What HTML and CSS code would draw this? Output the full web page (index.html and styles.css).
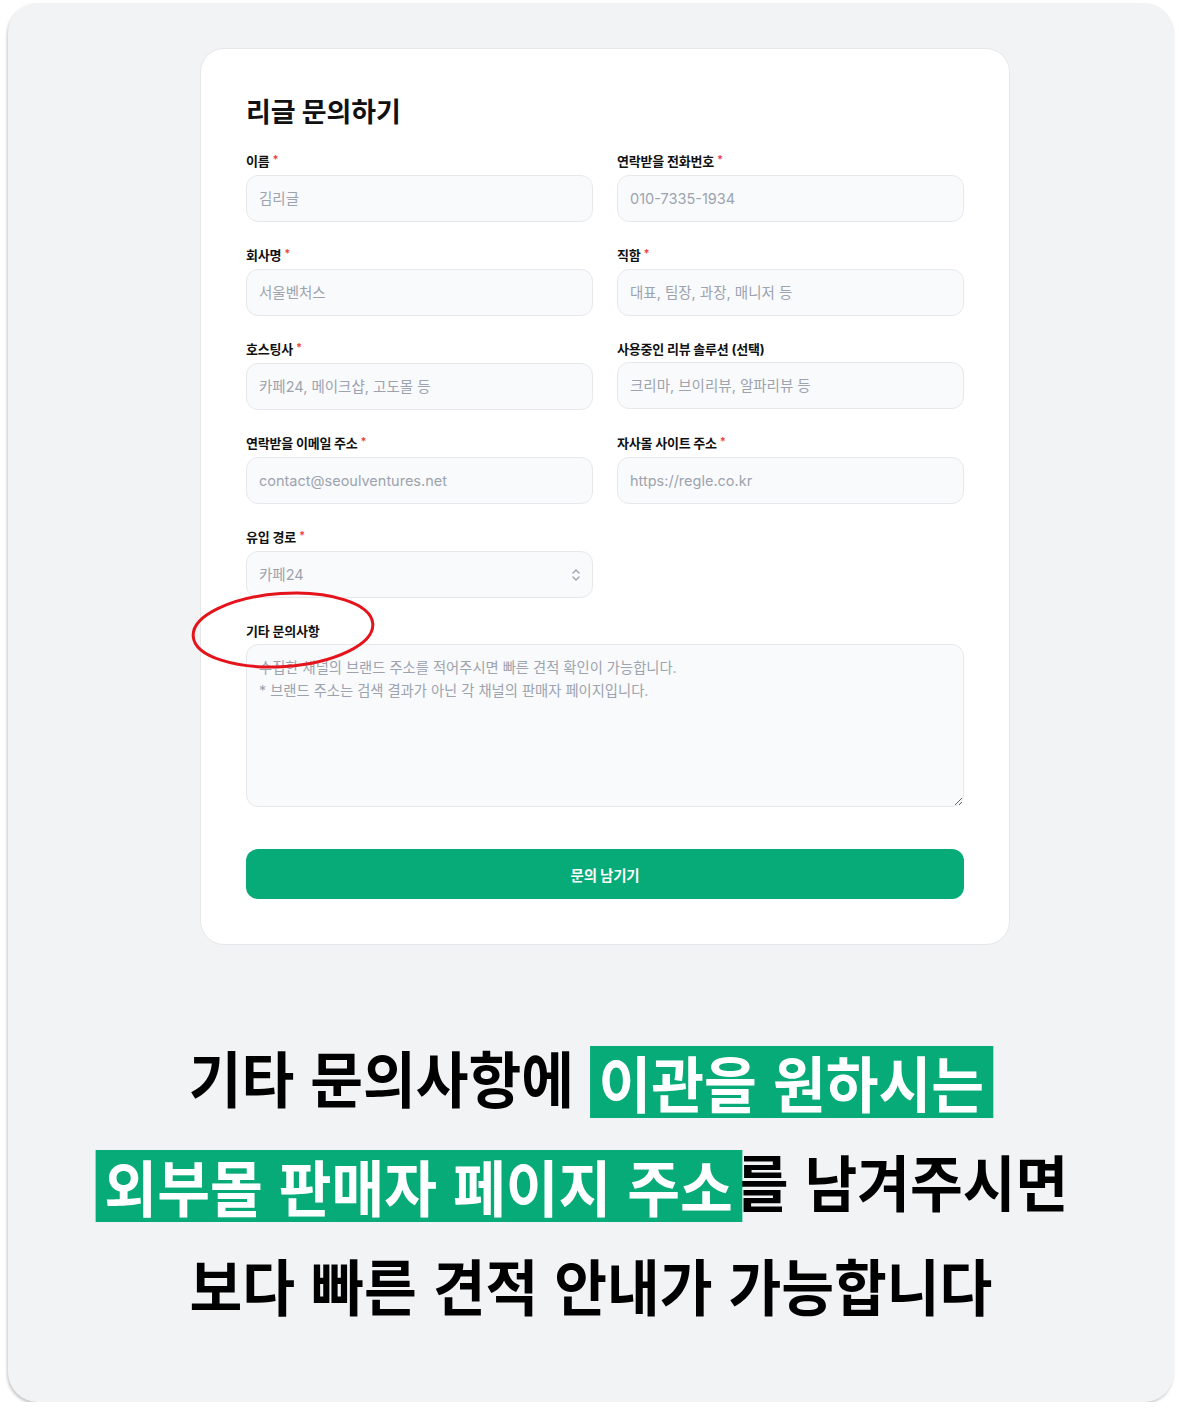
FILE: index.html
```html
<!DOCTYPE html>
<html lang="ko">
<head>
<meta charset="utf-8">
<link rel="stylesheet" href="styles.css">
</head>
<body>
<div class="frame">
  <div class="card">
    <h1 class="title">리글 문의하기</h1>
    <form class="grid">
      <div class="field">
        <label class="label">이름<span class="req">*</span></label>
        <input class="input" placeholder="김리글">
      </div>
      <div class="field">
        <label class="label">연락받을 전화번호<span class="req">*</span></label>
        <input class="input" placeholder="010-7335-1934">
      </div>
      <div class="field">
        <label class="label">회사명<span class="req">*</span></label>
        <input class="input" placeholder="서울벤처스">
      </div>
      <div class="field">
        <label class="label">직함<span class="req">*</span></label>
        <input class="input" placeholder="대표, 팀장, 과장, 매니저 등">
      </div>
      <div class="field">
        <label class="label">호스팅사<span class="req">*</span></label>
        <input class="input" placeholder="카페24, 메이크샵, 고도몰 등">
      </div>
      <div class="field">
        <label class="label">사용중인 리뷰 솔루션 (선택)</label>
        <input class="input" placeholder="크리마, 브이리뷰, 알파리뷰 등">
      </div>
      <div class="field">
        <label class="label">연락받을 이메일 주소<span class="req">*</span></label>
        <input class="input" placeholder="contact@seoulventures.net">
      </div>
      <div class="field">
        <label class="label">자사몰 사이트 주소<span class="req">*</span></label>
        <input class="input" placeholder="https://regle.co.kr">
      </div>
      <div class="field">
        <label class="label">유입 경로<span class="req">*</span></label>
        <div class="select-wrap">
          <select class="input select"><option>카페24</option></select>
          <svg class="chev" width="10" height="14" viewBox="0 0 10 14" fill="none" stroke="#9ca3af" stroke-width="1.4" stroke-linecap="round" stroke-linejoin="round"><path d="M2 5 L5 2 L8 5"/><path d="M2 9 L5 12 L8 9"/></svg>
        </div>
      </div>
      <div class="field"></div>
      <div class="field wide">
        <label class="label">기타 문의사항</label>
        <textarea class="input area" placeholder="수집한 채널의 브랜드 주소를 적어주시면 빠른 견적 확인이 가능합니다.&#10;* 브랜드 주소는 검색 결과가 아닌 각 채널의 판매자 페이지입니다."></textarea>
        <svg class="circle" width="190" height="84" viewBox="0 0 190 84"><ellipse cx="93" cy="41" rx="90" ry="36.5" transform="rotate(-4 93 41)" fill="none" stroke="#e5141c" stroke-width="3"/></svg>
      </div>
      <button type="button" class="submit wide">문의 남기기</button>
    </form>
  </div>
  <div class="caption">
    <div class="line">기타 문의사항에 <span class="hl">이관을 원하시는 </span></div>
    <div class="line line2"><span class="hl hl2">외부몰 판매자 페이지 주소</span>를 남겨주시면</div>
    <div class="line">보다 빠른 견적 안내가 가능합니다</div>
  </div>
</div>
</body>
</html>
```

FILE: styles.css
```css
html, body {
  margin: 0;
  padding: 0;
  background: #ffffff;
}
body {
  font-family: Inter, "Noto Sans CJK KR", sans-serif;
  color: #111827;
}
.frame {
  margin: 3px 5px 0 8px;
  width: 1166px;
  height: 1399px;
  background: #f2f3f5;
  border-radius: 30px;
  box-shadow: -1px 2px 3px rgba(0, 0, 0, 0.22);
  padding-top: 45px;
  box-sizing: border-box;
  overflow: hidden;
}
.card {
  margin-left: 192px;
  width: 810px;
  box-sizing: border-box;
  background: #ffffff;
  border: 1px solid #e6e7ea;
  border-radius: 24px;
  padding: 46px 45px 45px 45px;
}
.title {
  margin: 0 0 22px 0;
  font-size: 27px;
  line-height: 36px;
  font-weight: 700;
  letter-spacing: -0.1px;
  color: #111111;
}
.grid {
  display: grid;
  grid-template-columns: 347px 347px;
  column-gap: 24px;
  row-gap: 25px;
  margin: 0;
}
.field {
  display: flex;
  flex-direction: column;
  gap: 5px;
  position: relative;
}
.wide {
  grid-column: 1 / span 2;
}
.label {
  font-size: 13px;
  line-height: 16px;
  font-weight: 700;
  letter-spacing: -0.2px;
  color: #111111;
}
.req {
  color: #ef4444;
  font-size: 11px;
  margin-left: 3px;
  position: relative;
  top: -3px;
}
.input {
  box-sizing: border-box;
  height: 47px;
  width: 100%;
  margin: 0;
  border: 1px solid #e7e8ec;
  border-radius: 12px;
  background: #f9fafb;
  padding: 0 12px;
  font-family: Inter, "Noto Sans CJK KR", sans-serif;
  font-size: 14.5px;
  letter-spacing: 0;
  color: #9ca3af;
  outline: none;
}
.input::placeholder {
  color: #9ca3af;
}
.select-wrap {
  position: relative;
}
.select {
  appearance: none;
  -webkit-appearance: none;
  display: block;
}
.chev {
  position: absolute;
  right: 12px;
  top: 17px;
}
.area {
  height: 163px;
  padding: 11px 12px;
  line-height: 23px;
  font-size: 14.3px;
  resize: vertical;
  display: block;
}
.circle {
  position: absolute;
  left: -56px;
  top: -34px;
  pointer-events: none;
}
.submit {
  margin-top: 17px;
  height: 50px;
  border: none;
  border-radius: 12px;
  background: #06ab77;
  color: #ffffff;
  font-family: Inter, "Noto Sans CJK KR", sans-serif;
  font-size: 14.5px;
  font-weight: 700;
  letter-spacing: -0.2px;
}
.caption {
  margin-top: 80px;
  text-align: center;
  font-family: "Noto Sans CJK KR", sans-serif;
  font-weight: 700;
  font-size: 61px;
  color: #000000;
}
.line {
  height: 104px;
  line-height: 104px;
  white-space: nowrap;
  transform: scaleX(0.94);
}
.line2 {
  padding-right: 19px;
}
.hl {
  display: inline-block;
  background: #06ab77;
  color: #ffffff;
  line-height: 72px;
  height: 72px;
  padding: 0 10px 0 9px;
  vertical-align: middle;
  position: relative;
  top: -4px;
}
.hl2 {
  margin-right: -7px;
  padding-right: 10px;
}
```
